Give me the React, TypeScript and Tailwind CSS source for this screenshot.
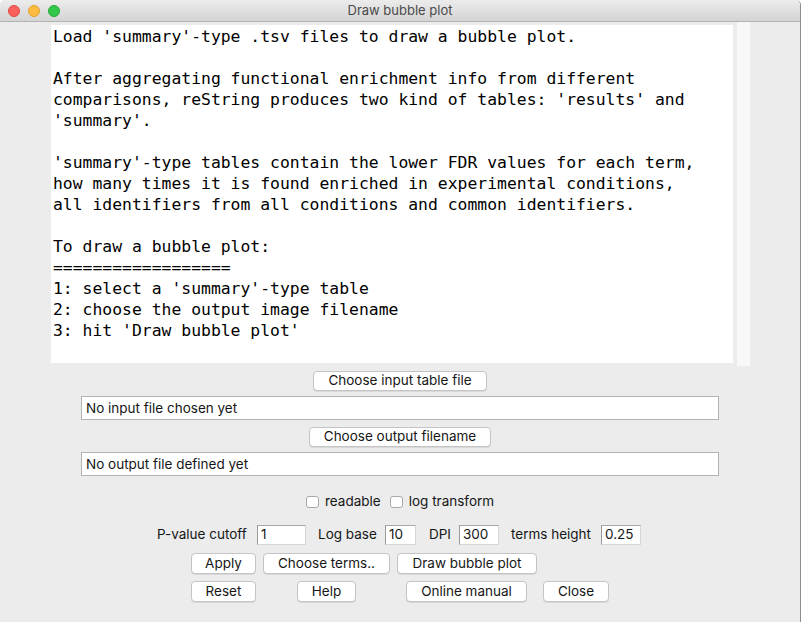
import React from "react";

const ui = { fontFamily: "Inter, 'Liberation Sans', sans-serif" };
const mono = { fontFamily: "'DejaVu Sans Mono', 'Liberation Mono', monospace" };

const lines = [
  "Load 'summary'-type .tsv files to draw a bubble plot.",
  "",
  "After aggregating functional enrichment info from different",
  "comparisons, reString produces two kind of tables: 'results' and",
  "'summary'.",
  "",
  "'summary'-type tables contain the lower FDR values for each term,",
  "how many times it is found enriched in experimental conditions,",
  "all identifiers from all conditions and common identifiers.",
  "",
  "To draw a bubble plot:",
  "==================",
  "1: select a 'summary'-type table",
  "2: choose the output image filename",
  "3: hit 'Draw bubble plot'",
];

function Btn({ children, w, cls = "" }: { children: React.ReactNode; w: string; cls?: string }) {
  return (
    <div
      className={`flex items-center justify-center shrink-0 whitespace-nowrap bg-white border border-[#c4c4c4] rounded-[4px] shadow-[0_1px_0_rgba(0,0,0,0.08)] text-[13.5px] text-[#161616] leading-none ${w} ${cls}`}
    >
      {children}
    </div>
  );
}

function Field({ value, w }: { value: string; w: string }) {
  return (
    <div
      className={`h-[20px] shrink-0 bg-white border border-[#d6d6d6] border-l-[#9a9a9a] border-t-[#a8a8a8] flex items-center pl-[3px] text-[13.5px] text-[#161616] leading-none ${w}`}
    >
      {value}
    </div>
  );
}

function Check({ label }: { label: string }) {
  return (
    <div className="flex items-center">
      <div className="w-[13px] h-[12px] bg-white border border-[#a9a9a9] rounded-[3px]" />
      <span className="ml-[6px] text-[13.5px] text-[#161616] leading-none whitespace-nowrap">{label}</span>
    </div>
  );
}

export default function App() {
  return (
    <div
      className="w-[801px] h-[622px] bg-[#ececec] flex flex-col overflow-hidden rounded-t-[5px] border-r border-[#8e8e8e]"
      style={ui}
    >
      {/* title bar */}
      <div className="relative h-[22px] shrink-0 bg-gradient-to-b from-[#ececec] to-[#d4d4d4] border-b border-[#b3b3b3] flex items-center justify-center">
        <div className="absolute left-[8px] top-[5px] flex gap-[8px]">
          <div className="w-[12px] h-[12px] rounded-full bg-[#fc605c] border border-[#de4a45]" />
          <div className="w-[12px] h-[12px] rounded-full bg-[#fdbc40] border border-[#dea034]" />
          <div className="w-[12px] h-[12px] rounded-full bg-[#34c84a] border border-[#27aa35]" />
        </div>
        <span className="text-[13px] text-[#4a4a4a] leading-none">Draw bubble plot</span>
      </div>

      {/* text area + scrollbar */}
      <div className="flex items-start pl-[51px] shrink-0">
        <div
          className="mt-[3px] w-[682px] h-[338px] bg-white text-black text-[16.4px] leading-[21px] whitespace-pre pl-[2px] pt-[1px] overflow-hidden"
          style={mono}
        >
          {lines.map((l, i) => (
            <div key={i} className="h-[21px]">
              {l}
            </div>
          ))}
        </div>
        <div className="ml-[4px] w-[13px] h-[344px] bg-[#f8f8f8]" />
      </div>

      {/* input file */}
      <div className="flex justify-center mt-[5px]">
        <Btn w="w-[174px] h-[20px]">Choose input table file</Btn>
      </div>
      <div className="flex justify-center mt-[5px]">
        <div className="w-[638px] h-[24px] bg-white border border-[#b3b3b3] flex items-center pl-[4px] text-[13.5px] text-[#161616]">
          No input file chosen yet
        </div>
      </div>

      {/* output file */}
      <div className="flex justify-center mt-[7px]">
        <Btn w="w-[182px] h-[20px]">Choose output filename</Btn>
      </div>
      <div className="flex justify-center mt-[5px]">
        <div className="w-[638px] h-[24px] bg-white border border-[#b3b3b3] flex items-center pl-[4px] text-[13.5px] text-[#161616]">
          No output file defined yet
        </div>
      </div>

      {/* checkboxes */}
      <div className="flex items-center h-[16px] mt-[18px] pl-[306px]">
        <Check label="readable" />
        <div className="ml-[9px]">
          <Check label="log transform" />
        </div>
      </div>

      {/* parameters */}
      <div className="flex items-center h-[20px] mt-[15px] pl-[157px] text-[13.5px] text-[#161616] leading-none whitespace-nowrap">
        <span className="w-[92px] shrink-0">P-value cutoff</span>
        <div className="ml-[8px]">
          <Field value="1" w="w-[49px]" />
        </div>
        <span className="ml-[12px] w-[58px] shrink-0">Log base</span>
        <div className="ml-[9px]">
          <Field value="10" w="w-[31px]" />
        </div>
        <span className="ml-[13px] w-[21px] shrink-0">DPI</span>
        <div className="ml-[9px]">
          <Field value="300" w="w-[40px]" />
        </div>
        <span className="ml-[12px] w-[82px] shrink-0">terms height</span>
        <div className="ml-[8px]">
          <Field value="0.25" w="w-[40px]" />
        </div>
      </div>

      {/* buttons row 1 */}
      <div className="flex items-center h-[21px] mt-[8px] pl-[191px]">
        <Btn w="w-[65px] h-[21px]">Apply</Btn>
        <Btn w="w-[127px] h-[21px]" cls="ml-[7px]">Choose terms..</Btn>
        <Btn w="w-[140px] h-[21px]" cls="ml-[7px]">Draw bubble plot</Btn>
      </div>

      {/* buttons row 2 */}
      <div className="flex items-center h-[21px] mt-[7px] pl-[191px]">
        <Btn w="w-[65px] h-[21px]">Reset</Btn>
        <Btn w="w-[59px] h-[21px]" cls="ml-[41px]">Help</Btn>
        <Btn w="w-[121px] h-[21px]" cls="ml-[50px]">Online manual</Btn>
        <Btn w="w-[66px] h-[21px]" cls="ml-[16px]">Close</Btn>
      </div>
    </div>
  );
}
